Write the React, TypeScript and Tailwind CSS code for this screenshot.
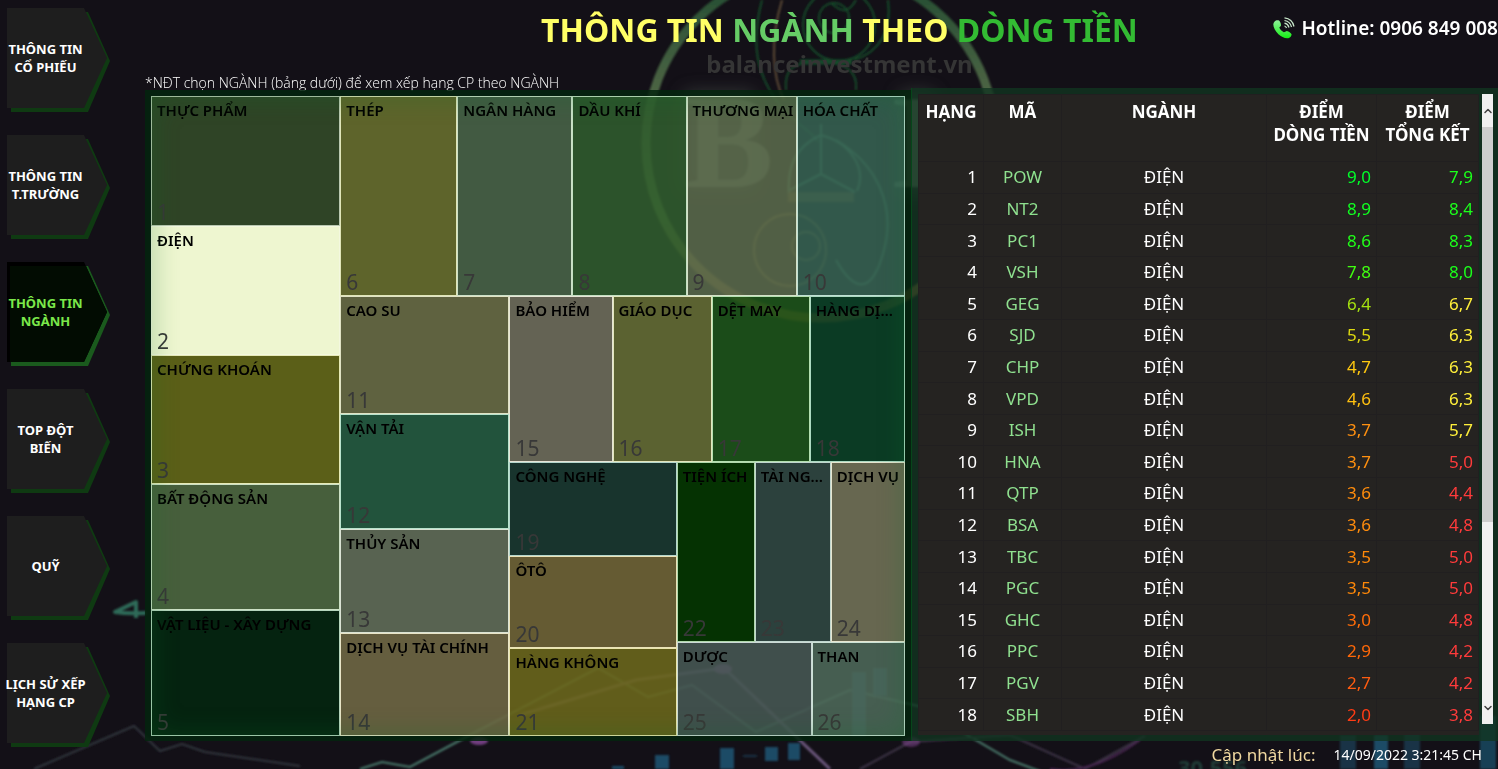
import { useState } from 'react';
import { ChevronDown, ChevronUp } from 'lucide-react';
import clsx from 'clsx';

type Tile = { name: string; rank: number; weight: number; color: string };
type Split = { dir: 'row' | 'col'; weight: number; items: Node[] };
type Node = Tile | Split;

const MENU = [
  ['THÔNG TIN', 'CỔ PHIẾU'],
  ['THÔNG TIN', 'T.TRƯỜNG'],
  ['THÔNG TIN', 'NGÀNH'],
  ['TOP ĐỘT', 'BIẾN'],
  ['QUỸ'],
  ['LỊCH SỬ XẾP', 'HẠNG CP'],
];

const tile = (rank: number, name: string, weight: number, color: string): Tile => ({
  rank,
  name,
  weight,
  color,
});
const row = (weight: number, items: Node[]): Split => ({ dir: 'row', weight, items });
const col = (weight: number, items: Node[]): Split => ({ dir: 'col', weight, items });

const TREE = row(1, [
  col(189, [
    tile(1, 'THỰC PHẨM', 130, 'bg-[#334a28]/90 border-[#b9c8b0]'),
    tile(2, 'ĐIỆN', 129, 'bg-[#eef6d0] border-[#f3f8df]'),
    tile(3, 'CHỨNG KHOÁN', 129, 'bg-[#646818]/90 border-[#e6eab6]'),
    tile(4, 'BẤT ĐỘNG SẢN', 126, 'bg-[#4e6840]/90 border-[#cce0c4]'),
    tile(5, 'VẬT LIỆU - XÂY DỰNG', 126, 'bg-[#04260f]/90 border-[#b4d4bc]'),
  ]),
  col(564, [
    row(200, [
      tile(6, 'THÉP', 117, 'bg-[#676e2d]/90 border-[#e0e5b8]'),
      tile(7, 'NGÂN HÀNG', 115, 'bg-[#486347]/90 border-[#cce0c8]'),
      tile(8, 'DẦU KHÍ', 114, 'bg-[#305b2e]/90 border-[#c4e0c2]'),
      tile(9, 'THƯƠNG MẠI', 110, 'bg-[#59684a]/90 border-[#d4e0c8]'),
      tile(10, 'HÓA CHẤT', 108, 'bg-[#366151]/90 border-[#c0e0d4]'),
    ]),
    row(440, [
      col(169, [
        tile(11, 'CAO SU', 118, 'bg-[#686b45]/90 border-[#e0e2c4]'),
        tile(12, 'VẬN TẢI', 115, 'bg-[#255b40]/90 border-[#b8e2cc]'),
        tile(13, 'THỦY SẢN', 104, 'bg-[#606d58]/90 border-[#dae2d4]'),
        tile(14, 'DỊCH VỤ TÀI CHÍNH', 103, 'bg-[#6f6744]/90 border-[#e8e4c6]'),
      ]),
      col(395, [
        row(166, [
          tile(15, 'BẢO HIỂM', 103, 'bg-[#6e6d5b]/90 border-[#e6e5d6]'),
          tile(16, 'GIÁO DỤC', 99, 'bg-[#646b34]/90 border-[#e2e6bc]'),
          tile(17, 'DỆT MAY', 98, 'bg-[#1d531a]/90 border-[#b4e0b0]'),
          tile(18, 'HÀNG DỊCH VỤ', 95, 'bg-[#0b4026]/90 border-[#acdac2]'),
        ]),
        row(274, [
          col(167, [
            tile(19, 'CÔNG NGHỆ', 94, 'bg-[#1a3830]/90 border-[#b4d6cc]'),
            tile(20, 'ÔTÔ', 92, 'bg-[#6f6436]/90 border-[#eae2b8]'),
            tile(21, 'HÀNG KHÔNG', 88, 'bg-[#6a661c]/90 border-[#eae6ac]'),
          ]),
          col(228, [
            row(180, [
              tile(22, 'TIỆN ÍCH', 78, 'bg-[#043600]/90 border-[#b0d8ac]'),
              tile(23, 'TÀI NGUYÊN', 76, 'bg-[#304741]/90 border-[#c0d6ce]'),
              tile(24, 'DỊCH VỤ', 74, 'bg-[#717156]/90 border-[#e6e6d0]'),
            ]),
            row(94, [
              tile(25, 'DƯỢC', 135, 'bg-[#465652]/90 border-[#ccdad6]'),
              tile(26, 'THAN', 93, 'bg-[#4c6758]/90 border-[#cce2d6]'),
            ]),
          ]),
        ]),
      ]),
    ]),
  ]),
]);

const STOCKS = [
  { code: 'POW', flow: '9,0', total: '7,9', flowColor: 'text-[#00ff2a]', totalColor: 'text-[#1bff1b]' },
  { code: 'NT2', flow: '8,9', total: '8,4', flowColor: 'text-[#10ff20]', totalColor: 'text-[#1bff1b]' },
  { code: 'PC1', flow: '8,6', total: '8,3', flowColor: 'text-[#20ff18]', totalColor: 'text-[#1bff1b]' },
  { code: 'VSH', flow: '7,8', total: '8,0', flowColor: 'text-[#40ff10]', totalColor: 'text-[#1bff1b]' },
  { code: 'GEG', flow: '6,4', total: '6,7', flowColor: 'text-[#a5e010]', totalColor: 'text-[#ffef3a]' },
  { code: 'SJD', flow: '5,5', total: '6,3', flowColor: 'text-[#dcd810]', totalColor: 'text-[#ffef3a]' },
  { code: 'CHP', flow: '4,7', total: '6,3', flowColor: 'text-[#ffc810]', totalColor: 'text-[#ffef3a]' },
  { code: 'VPD', flow: '4,6', total: '6,3', flowColor: 'text-[#ffc010]', totalColor: 'text-[#ffef3a]' },
  { code: 'ISH', flow: '3,7', total: '5,7', flowColor: 'text-[#ff9010]', totalColor: 'text-[#ffef3a]' },
  { code: 'HNA', flow: '3,7', total: '5,0', flowColor: 'text-[#ff9010]', totalColor: 'text-[#ff3b3b]' },
  { code: 'QTP', flow: '3,6', total: '4,4', flowColor: 'text-[#ff8c0c]', totalColor: 'text-[#ff3b3b]' },
  { code: 'BSA', flow: '3,6', total: '4,8', flowColor: 'text-[#ff8c0c]', totalColor: 'text-[#ff3b3b]' },
  { code: 'TBC', flow: '3,5', total: '5,0', flowColor: 'text-[#ff8808]', totalColor: 'text-[#ff3b3b]' },
  { code: 'PGC', flow: '3,5', total: '5,0', flowColor: 'text-[#ff8808]', totalColor: 'text-[#ff3b3b]' },
  { code: 'GHC', flow: '3,0', total: '4,8', flowColor: 'text-[#ff6c08]', totalColor: 'text-[#ff3b3b]' },
  { code: 'PPC', flow: '2,9', total: '4,2', flowColor: 'text-[#ff6808]', totalColor: 'text-[#ff3b3b]' },
  { code: 'PGV', flow: '2,7', total: '4,2', flowColor: 'text-[#ff5c10]', totalColor: 'text-[#ff3b3b]' },
  { code: 'SBH', flow: '2,0', total: '3,8', flowColor: 'text-[#ff3c14]', totalColor: 'text-[#ff3b3b]' },
];

function Backdrop() {
  return (
    <svg
      aria-hidden
      viewBox="0 0 1498 769"
      preserveAspectRatio="none"
      className="pointer-events-none absolute inset-0 h-full w-full"
    >
      <defs>
        <linearGradient id="ring" x1="0" y1="0" x2="0" y2="1">
          <stop offset="0" stopColor="#1f4a30" />
          <stop offset="0.35" stopColor="#4c6444" />
          <stop offset="0.7" stopColor="#6f9a4c" />
          <stop offset="1" stopColor="#a85a28" />
        </linearGradient>
        <filter id="soft">
          <feGaussianBlur stdDeviation="1" />
        </filter>
        <filter id="haze" x="-50%" y="-50%" width="200%" height="200%">
          <feGaussianBlur stdDeviation="9" />
        </filter>
      </defs>

      <g filter="url(#haze)" fill="#59635a" opacity="0.5">
        <rect x="684" y="92" width="70" height="96" />
        <rect x="900" y="92" width="34" height="102" />
      </g>
      <circle cx="821" cy="143" r="175" fill="none" stroke="url(#ring)" strokeWidth="9" filter="url(#soft)" />
      <g fill="#8b9a86" opacity="0.8" fontFamily="Liberation Serif, serif" fontWeight="700" fontSize="134" filter="url(#soft)">
        <text x="684" y="187">B</text>
        <text x="890" y="187">I</text>
      </g>

      <g fill="none" stroke="#154a29" strokeWidth="2" filter="url(#soft)">
        <path d="M762 0C750 45 758 75 776 100S812 130 818 142" />
        <path d="M782 0C770 40 772 76 784 100" stroke="#5c4936" />
        <circle cx="839" cy="25" r="36" />
        <circle cx="834" cy="18" r="15" />
        <path d="M888 0c4 30-8 52-34 60M856 0c-8 14-14 12-24 4" />
        <path d="M786 90c-2-22 8-28 34-28s38 10 36 28" />
        <path d="M800 62h52" strokeWidth="5" />
        <path
          d="M821 124v50M790 190l31-16 34 18M821 135c-26 12-34 30-32 62M821 135c30 8 46 34 36 56M836 140c40 24 60 64 48 110s-30 42-48 10"
          stroke="#4c9f76"
        />
        <path d="M788 192h66v10h-66z" fill="#64502c" stroke="none" />
        <circle cx="790" cy="250" r="36" stroke="#7a6a38" />
        <circle cx="806" cy="246" r="14" stroke="#7a6a38" />
      </g>

      <g fontFamily="Noto Sans, sans-serif" fontWeight="700" fontSize="22" fill="#2f6b58" filter="url(#soft)">
        <path
          d="M136 618V602L115 612Q128 614 146 613"
          fill="none"
          stroke="#2f6b58"
          strokeWidth="4"
          strokeLinejoin="round"
        />
        <text x="1178" y="776" opacity="0.5">30,556</text>
      </g>

      <g fill="none" filter="url(#soft)" strokeWidth="2">
        <path d="M34 769L134 726L160 751L182 744L205 752L300 766" stroke="#30363c" />
        <path d="M360 769L382 762L410 767L470 735L598 668L648 697L692 685L756 732L850 690L918 706L1010 760L1090 790" stroke="#4a7a6c" />
        <path d="M520 715L636 680L724 668L830 769" stroke="#6a567b" strokeWidth="3" />
        <path d="M860 769L910 742L1010 735L1085 769L1145 736" stroke="#3c3446" />
        <path d="M1050 769Q1090 776 1140 740" stroke="#4a2652" />
      </g>
      <g fill="#8a4a9a" filter="url(#soft)">
        <ellipse cx="479" cy="741" rx="9" ry="4" opacity="0.8" />
        <ellipse cx="723" cy="669" rx="9" ry="5" />
        <ellipse cx="911" cy="742" rx="9" ry="5" opacity="0.5" />
      </g>
      <g fill="#1b4c66" filter="url(#soft)">
        <rect x="612" y="766" width="12" height="3" />
        <rect x="655" y="755" width="14" height="14" />
        <rect x="720" y="748" width="14" height="21" />
        <rect x="743" y="755" width="14" height="2" opacity="0.6" />
        <rect x="765" y="747" width="13" height="14" />
        <rect x="788" y="743" width="12" height="17" />
        <rect x="852" y="672" width="14" height="64" />
        <rect x="873" y="668" width="14" height="28" />
        <rect x="1340" y="735" width="16" height="34" opacity="0.6" />
        <rect x="1374" y="735" width="14" height="34" />
        <rect x="1404" y="720" width="16" height="49" opacity="0.6" />
        <rect x="1480" y="716" width="16" height="53" opacity="0.8" />
      </g>
    </svg>
  );
}

function MenuButton({ lines, active, onClick }: { lines: string[]; active: boolean; onClick: () => void }) {
  return (
    <button
      type="button"
      aria-pressed={active}
      onClick={onClick}
      className={clsx(
        'relative flex h-[104px] w-[104px] cursor-pointer items-center pb-1 text-[13px] leading-[18px] font-bold',
        active ? 'text-[#7be84a]' : 'text-white',
      )}
    >
      <svg aria-hidden viewBox="0 0 104 104" className="absolute inset-0 h-full w-full">
        <path d="M4 4H81L103 53L81 104H4Z" fill={active ? '#1a5a1d' : '#0f3a12'} />
        <path d="M0 0H77L100 50L77 100H0Z" fill={active ? '#000000' : '#1e1e1e'} />
        {active && <path d="M3 4H79L100 50L77 100H3Z" fill="#020c02" />}
      </svg>
      <span className="relative w-[77px] text-center whitespace-nowrap">
        {lines.map((line) => (
          <span key={line} className="-mx-2 block">
            {line}
          </span>
        ))}
      </span>
    </button>
  );
}

function TreeNode({ node, selected, onSelect }: { node: Node; selected: number; onSelect: (rank: number) => void }) {
  if ('items' in node) {
    return (
      <div
        style={{ flexGrow: node.weight }}
        className={clsx('flex min-h-0 min-w-0 basis-0', node.dir === 'col' && 'flex-col')}
      >
        {node.items.map((item, i) => (
          <TreeNode key={i} node={item} selected={selected} onSelect={onSelect} />
        ))}
      </div>
    );
  }

  return (
    <button
      type="button"
      aria-pressed={selected === node.rank}
      onClick={() => onSelect(node.rank)}
      style={{ flexGrow: node.weight }}
      className={clsx(
        'flex min-h-0 min-w-0 basis-0 cursor-pointer flex-col justify-between border text-left',
        node.color,
      )}
    >
      <span className="w-full truncate pt-[3px] pr-0.5 pl-[5px] text-[15px] leading-5 font-semibold text-black">
        {node.name}
      </span>
      <span className="pl-[5px] text-[21px] leading-[26px] text-[#383838]">{node.rank}</span>
    </button>
  );
}

function PhoneIcon() {
  return (
    <svg aria-hidden viewBox="0 0 22 22" className="h-[22px] w-[22px]">
      <defs>
        <linearGradient id="phone" x1="0" y1="0" x2="0" y2="1">
          <stop offset="0" stopColor="#8fef9a" />
          <stop offset="1" stopColor="#14f014" />
        </linearGradient>
      </defs>
      <path
        d="M1.600 4.500C2.600 3.300 4.800 2.900 6 3.600C7.300 5 8 6.800 8 8.400C7.700 9.500 6.300 9.800 6.300 10.600C6.800 12.400 8.900 14.400 10.800 15.300C12 15.300 12.600 14 13.900 14C15.800 14.400 17.800 15.800 18.600 17.200C18.600 18.700 17.600 20.200 16 20.900C13 22 8.300 20 5.400 17.200C2.300 14.100 .2 10 .3 7.200C.4 6 .9 5.200 1.600 4.500Z"
        fill="url(#phone)"
      />
      <g fill="none" stroke="#c9e8cb" strokeWidth="1.200">
        <path d="M11.500 9A3 3 0 0 1 13.500 11" />
        <path d="M11.500 6.200A6 6 0 0 1 16 10.500" />
        <path d="M11.500 3.500A8.500 8.500 0 0 1 18.500 10" />
        <path d="M11.500 .900A11 11 0 0 1 21 9.500" />
      </g>
    </svg>
  );
}

function StockTable() {
  return (
    <div className="min-w-0 flex-1 bg-[#252321] pb-1">
      <table className="h-full w-full table-fixed border-collapse text-[17px] leading-[22px] text-white">
        <colgroup>
          <col className="w-[65px]" />
          <col className="w-[78px]" />
          <col />
          <col className="w-[110px]" />
          <col className="w-[102px]" />
        </colgroup>
        <thead>
          <tr className="h-[67px] leading-[23px] [&>th]:border [&>th]:border-[#211f20] [&>th]:px-0 [&>th]:pt-[5px] [&>th]:align-top [&>th]:font-bold [&>th]:whitespace-nowrap">
            <th>HẠNG</th>
            <th>MÃ</th>
            <th>NGÀNH</th>
            <th>
              ĐIỂM
              <br />
              DÒNG TIỀN
            </th>
            <th>
              ĐIỂM
              <br />
              TỔNG KẾT
            </th>
          </tr>
        </thead>
        <tbody>
          {STOCKS.map((s, i) => (
            <tr key={s.code} className="[&>td]:border [&>td]:border-[#211f20] [&>td]:py-0">
              <td className="pr-1.5 text-right">{i + 1}</td>
              <td className="text-center text-[#8fe08f]">{s.code}</td>
              <td className="text-center">ĐIỆN</td>
              <td className={clsx('pr-[5px] text-right', s.flowColor)}>{s.flow}</td>
              <td className={clsx('pr-[5px] text-right', s.totalColor)}>{s.total}</td>
            </tr>
          ))}
        </tbody>
      </table>
    </div>
  );
}

function ScrollBar() {
  return (
    <div className="mb-[11px] ml-[3px] flex w-[11px] flex-col bg-[#f0f0f0] text-[#404040]">
      <button type="button" aria-label="Cuộn lên" className="flex h-[33px] items-center justify-center">
        <ChevronUp className="h-3 w-3 shrink-0" strokeWidth={3} />
      </button>
      <div className="flex flex-1 flex-col">
        <div className="grow-[7] bg-[#cdcdcd]" />
        <div className="grow-[3]" />
      </div>
      <button type="button" aria-label="Cuộn xuống" className="flex h-[33px] items-center justify-center">
        <ChevronDown className="h-3 w-3 shrink-0" strokeWidth={3} />
      </button>
    </div>
  );
}

export default function App() {
  const [page, setPage] = useState(2);
  const [sector, setSector] = useState(2);

  return (
    <div className="relative flex h-screen overflow-hidden bg-[#131017] font-['Noto_Sans','Open_Sans',sans-serif] text-white">
      <Backdrop />

      <nav className="relative flex w-[145px] shrink-0 flex-col gap-[23px] pt-2 pl-[7px]">
        {MENU.map((lines, i) => (
          <MenuButton key={i} lines={lines} active={page === i} onClick={() => setPage(i)} />
        ))}
      </nav>

      <div className="relative flex min-w-0 flex-1 flex-col">
        <header className="grid grid-cols-[1fr_auto_1fr] pt-2 pl-9">
          <div className="col-start-2 text-center font-bold whitespace-nowrap">
            <h1 className="text-[32px] leading-[44px] text-[#ffff66]">
              THÔNG TIN <span className="text-[#66cc66]">NGÀNH</span> THEO{' '}
              <span className="text-[#33bb33]">DÒNG TIỀN</span>
            </h1>
            <p className="text-2xl leading-6 text-[#353535]">balanceinvestment.vn</p>
          </div>
          <p className="flex h-10 items-center justify-end gap-1.5 text-[19px] font-semibold whitespace-nowrap">
            <PhoneIcon />
            Hotline: 0906 849 008
          </p>
        </header>

        <main className="flex min-h-0 flex-1">
          <section className="flex min-w-0 flex-[766] flex-col">
            <p className="font-['Open_Sans','Noto_Sans',sans-serif] text-sm leading-[14px] font-light">
              *NĐT chọn NGÀNH (bảng dưới) để xem xếp hạng CP theo NGÀNH
            </p>
            <div className="relative flex min-h-0 flex-1 border-[6px] border-b-[5px] border-[#03240e]/85">
              <TreeNode node={TREE} selected={sector} onSelect={setSector} />
              <div className="pointer-events-none absolute inset-0 shadow-[inset_0_0_28px_rgba(10,110,40,0.3)]" />
            </div>
          </section>

          <section className="mt-3 flex min-w-0 flex-[587]">
            <div className="flex min-w-0 flex-1 border-l border-[#06461a] bg-[#123520]/80 pt-[6px] pr-[5px] pb-[6px] pl-[6px]">
              <StockTable />
              <ScrollBar />
            </div>
          </section>
        </main>

        <footer className="flex h-7 items-center justify-end gap-[18px] pr-4">
          <span className="text-[17px] text-[#f0d8a0]">Cập nhật lúc:</span>
          <time className="text-sm">14/09/2022 3:21:45 CH</time>
        </footer>
      </div>
    </div>
  );
}
